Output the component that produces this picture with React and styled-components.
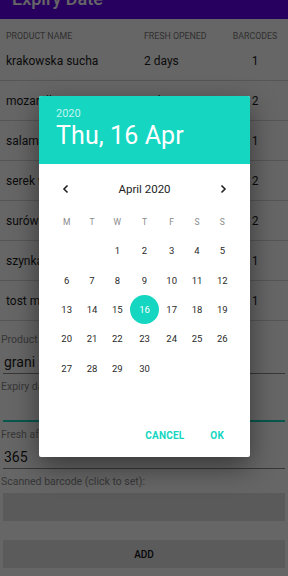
import React from "react";
import styled, { createGlobalStyle } from "styled-components";

const Global = createGlobalStyle`
  html, body { margin: 0; padding: 0; }
  body {
    width: 288px; height: 576px; overflow: hidden; background: #fff;
    font-family: Roboto, "Noto Sans", sans-serif;
  }
  * { box-sizing: border-box; }
`;

const TEAL = "#14d6c1";

const Page = styled.div`
  position: relative;
  width: 288px;
  height: 576px;
  overflow: hidden;
  background: #fff;
`;

const AppBar = styled.div`
  height: 19px;
  overflow: hidden;
  background: #6200ee;
`;

const AppTitle = styled.div`
  margin-top: -10px;
  padding-left: 12px;
  font-size: 18px;
  line-height: 18px;
  font-weight: 500;
  color: #fff;
`;

const Table = styled.div`
  display: flex;
  flex-direction: column;
`;

const TableRow = styled.div`
  display: grid;
  grid-template-columns: 138px 86px 1fr;
  align-items: center;
  padding-left: 6px;
  height: ${(p) => (p.$head ? "22px" : "40px")};
  padding-top: ${(p) => (p.$head ? "12px" : "0")};
  border-bottom: ${(p) => (p.$head ? "none" : "1px solid #d8d8d8")};
`;

const HeadCell = styled.div`
  font-size: 8.8px;
  line-height: 10px;
  color: #7a7a7a;
  text-transform: uppercase;
  white-space: nowrap;
  text-align: ${(p) => (p.$center ? "center" : "left")};
  padding-right: ${(p) => (p.$center ? "8px" : "0")};
`;

const Cell = styled.div`
  font-size: 12px;
  color: #1c1c1c;
  white-space: nowrap;
  text-align: ${(p) => (p.$center ? "center" : "left")};
  padding-right: ${(p) => (p.$center ? "8px" : "0")};
`;

const Form = styled.div`
  display: flex;
  flex-direction: column;
  padding: 0 3px;
`;

const Label = styled.div`
  font-size: 10.5px;
  line-height: 12px;
  color: #8a8a8a;
  margin-left: -2px;
  margin-top: ${(p) => p.$mt || "0px"};
  white-space: nowrap;
`;

const Field = styled.div`
  display: flex;
  align-items: flex-end;
  padding: 0 0 3px 1px;
  font-size: 14px;
  line-height: 16px;
  color: #1c1c1c;
  border-bottom: ${(p) => (p.$focus ? `2px solid ${TEAL}` : "1px solid #8a8a8a")};
  height: ${(p) => p.$h || "28px"};
`;

const BarcodeBox = styled.div`
  height: 28px;
  margin-top: 5px;
  background: #e2e2e2;
`;

const AddButton = styled.div`
  height: 28px;
  margin-top: 19px;
  background: #e4e4e4;
  display: flex;
  align-items: center;
  justify-content: center;
  font-size: 10px;
  font-weight: 500;
  color: #111;
`;

const Scrim = styled.div`
  position: absolute;
  inset: 0;
  background: rgba(0, 0, 0, 0.6);
`;

const Dialog = styled.div`
  position: absolute;
  left: 39px;
  top: 96px;
  width: 211px;
  height: 361px;
  background: #fff;
  border-radius: 2px;
  box-shadow: 0 10px 28px rgba(0, 0, 0, 0.45);
  display: flex;
  flex-direction: column;
  overflow: hidden;
`;

const DialogHead = styled.div`
  height: 68px;
  flex: none;
  background: ${TEAL};
  padding-left: 17px;
  display: flex;
  flex-direction: column;
  padding-top: 11px;
  color: #fff;
`;

const Year = styled.div`
  font-size: 11px;
  line-height: 14px;
  color: rgba(255, 255, 255, 0.75);
`;

const BigDate = styled.div`
  font-size: 25px;
  line-height: 30px;
  color: #fff;
  letter-spacing: 0.1px;
`;

const MonthRow = styled.div`
  margin-top: 10px;
  height: 30px;
  flex: none;
  display: flex;
  align-items: center;
  justify-content: space-between;
  padding: 0 22px 0 22px;
`;

const MonthName = styled.div`
  font-size: 11.5px;
  font-weight: 400;
  color: #1e1e1e;
`;

const Chevron = styled.svg`
  width: 10px;
  height: 10px;
`;

const Grid = styled.div`
  margin: 3px auto 0;
  width: 181px;
  display: grid;
  grid-template-columns: repeat(7, 1fr);
  grid-auto-rows: 29.3px;
`;

const WeekDay = styled.div`
  display: flex;
  align-items: center;
  justify-content: center;
  font-size: 8.5px;
  color: #8a8a8a;
`;

const Day = styled.div`
  display: flex;
  align-items: center;
  justify-content: center;
  font-size: 9.5px;
  color: #2a2a2a;
`;

const Selected = styled.div`
  width: 29px;
  height: 29px;
  border-radius: 50%;
  background: ${TEAL};
  color: #fff;
  display: flex;
  align-items: center;
  justify-content: center;
`;

const Actions = styled.div`
  margin-top: auto;
  margin-bottom: 4px;
  height: 36px;
  display: flex;
  align-items: center;
  justify-content: flex-end;
  gap: 26px;
  padding-right: 26px;
`;

const ActionBtn = styled.div`
  font-size: 10px;
  font-weight: 700;
  color: ${TEAL};
  letter-spacing: 0.2px;
`;

const rows = [
  ["krakowska sucha", "2 days", "1"],
  ["mozarella", "3 days", "2"],
  ["salami", "5 days", "1"],
  ["serek wiejski", "3 days", "2"],
  ["surówka", "2 days", "2"],
  ["szynka", "3 days", "1"],
  ["tost maślany", "4 days", "1"],
];

const weekdays = ["M", "T", "W", "T", "F", "S", "S"];

export default function App() {
  const days = [];
  for (let i = 0; i < 2; i++) days.push(null);
  for (let d = 1; d <= 30; d++) days.push(d);

  return (
    <Page>
      <Global />
      <AppBar>
        <AppTitle>Expiry Date</AppTitle>
      </AppBar>
      <Table>
        <TableRow $head>
          <HeadCell>Product name</HeadCell>
          <HeadCell>Fresh opened</HeadCell>
          <HeadCell $center>Barcodes</HeadCell>
        </TableRow>
        {rows.map((r, i) => (
          <TableRow key={i}>
            <Cell>{r[0]}</Cell>
            <Cell>{r[1]}</Cell>
            <Cell $center>{r[2]}</Cell>
          </TableRow>
        ))}
      </Table>
      <Form>
        <Label $mt="13px">Product name</Label>
        <Field>grani</Field>
        <Label $mt="7px">Expiry date</Label>
        <Field $focus $h="29px" />
        <Label $mt="7px">Fresh after opening (days)</Label>
        <Field>365</Field>
        <Label $mt="7px">Scanned barcode (click to set):</Label>
        <BarcodeBox />
        <AddButton>ADD</AddButton>
      </Form>
      <Scrim />
      <Dialog>
        <DialogHead>
          <Year>2020</Year>
          <BigDate>Thu, 16 Apr</BigDate>
        </DialogHead>
        <MonthRow>
          <Chevron viewBox="0 0 10 10">
            <path d="M6.5 1.5 L3 5 L6.5 8.5" fill="none" stroke="#222" strokeWidth="1.6" />
          </Chevron>
          <MonthName>April 2020</MonthName>
          <Chevron viewBox="0 0 10 10">
            <path d="M3.5 1.5 L7 5 L3.5 8.5" fill="none" stroke="#222" strokeWidth="1.6" />
          </Chevron>
        </MonthRow>
        <Grid>
          {weekdays.map((w, i) => (
            <WeekDay key={"w" + i}>{w}</WeekDay>
          ))}
          {days.map((d, i) => (
            <Day key={i}>{d === 16 ? <Selected>16</Selected> : d}</Day>
          ))}
        </Grid>
        <Actions>
          <ActionBtn>CANCEL</ActionBtn>
          <ActionBtn>OK</ActionBtn>
        </Actions>
      </Dialog>
    </Page>
  );
}
